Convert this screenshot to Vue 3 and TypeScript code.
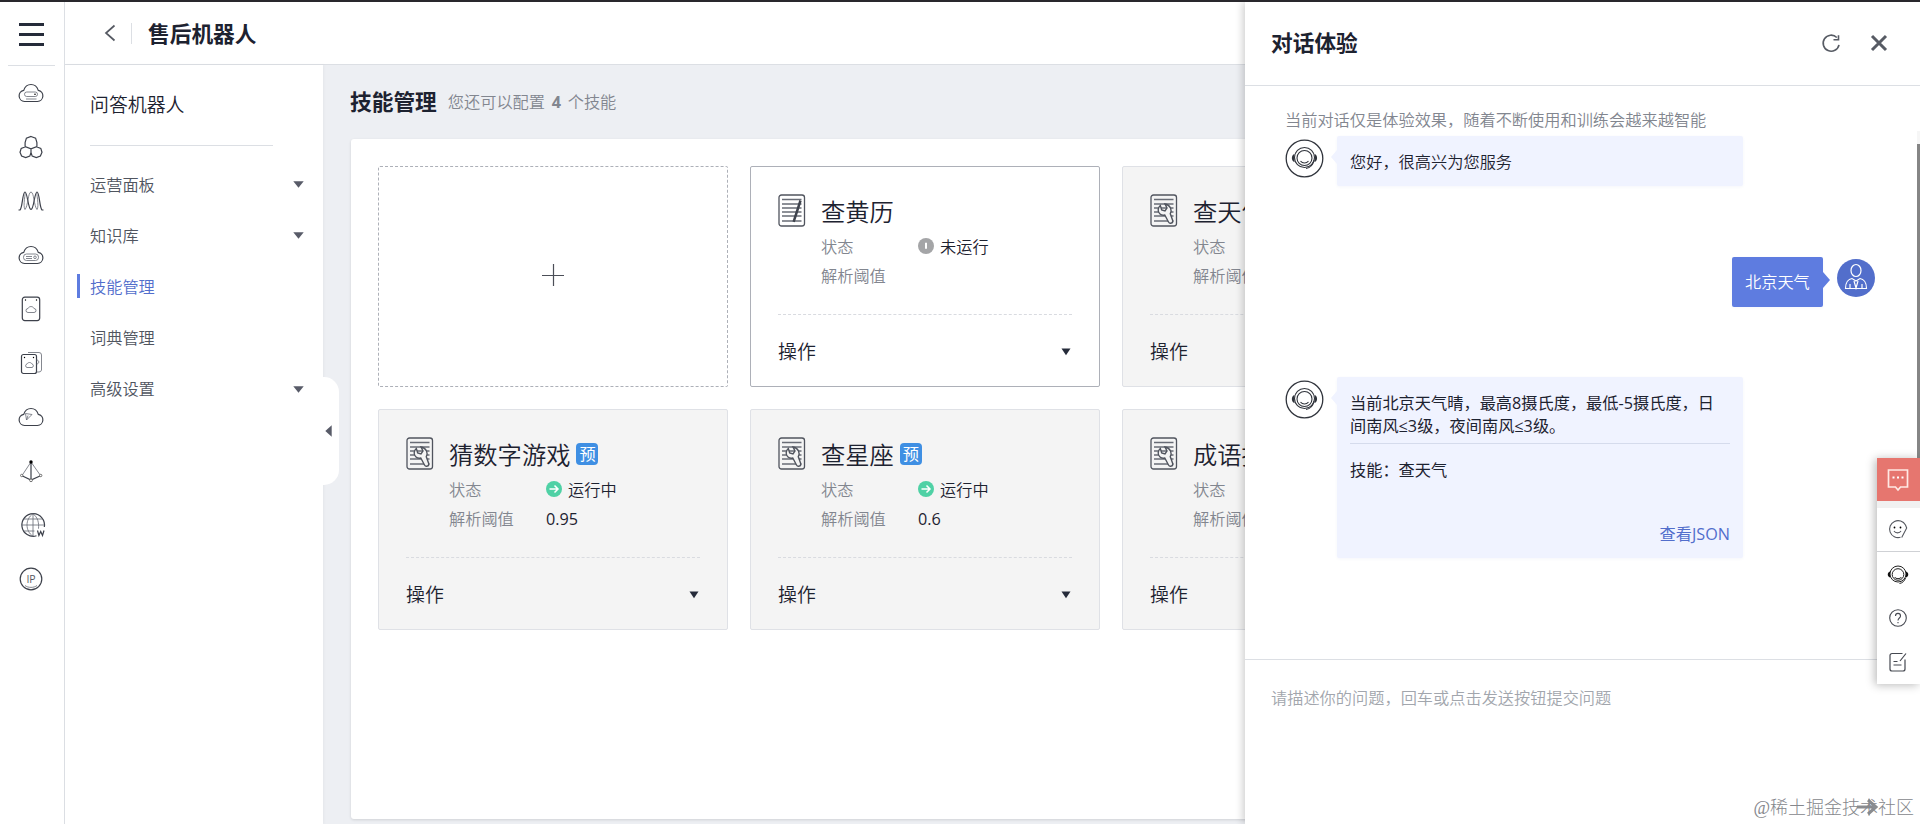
<script setup lang="ts">
interface NavItem { label: string; expandable: boolean; active?: boolean }
interface Skill { name: string; preset: boolean; running: boolean; threshold: string }

const nav: NavItem[] = [
  { label: '运营面板', expandable: true },
  { label: '知识库', expandable: true },
  { label: '技能管理', expandable: false, active: true },
  { label: '词典管理', expandable: false },
  { label: '高级设置', expandable: true },
]

const skills: Skill[] = [
  { name: '查黄历', preset: false, running: false, threshold: '' },
  { name: '查天气', preset: true, running: true, threshold: '0.9' },
  { name: '猜数字游戏', preset: true, running: true, threshold: '0.95' },
  { name: '查星座', preset: true, running: true, threshold: '0.6' },
  { name: '成语接龙', preset: true, running: true, threshold: '0.95' },
]
</script>

<template>
  <div class="app">
    <aside class="rail">
      <div class="burger"><i></i><i></i><i></i></div>
      <div class="rail-line"></div>
      <div class="rail-item">
        <svg width="26" height="26" viewBox="0 0 26 26"><path class="k" d="M6.500 21.500a5.600 5.600 0 0 1-.8-11.100C7 6.500 9.700 4.500 13 4.500s6 2 7.300 5.900a5.600 5.600 0 0 1-.8 11.100z" /><rect class="t" x="6.500" y="12" width="13" height="4.500" rx="2.200" /><path class="t" d="M8 19h10.500" /><circle cx="17" cy="14.200" r=".8" /></svg>
      </div>
      <div class="rail-item">
        <svg width="26" height="26" viewBox="0 0 26 26"><path class="k" d="M13 2.500l4.600 1.700 1.300 4.300V12.600L13 14.800 7.100 12.600V8.500l1.300-4.300zM7.500 12.700L3.200 14.400 2 18.200l1.600 3.900 4.100 1.500 4.100-1.500L13 18.500v-4M18.500 12.700l4.300 1.700 1.200 3.800-1.600 3.900-4.100 1.500-4.100-1.500L13 18.500" /></svg>
      </div>
      <div class="rail-item">
        <svg width="26" height="26" viewBox="0 0 26 26"><path class="k" d="M.5 22h1.500C4.500 20 4.500 4 7 4s3 17 6 17.500C16 21 16.500 4 19 4s2.500 16 5 18h1.500" /><path class="t" d="M7 21.500c3-3 3-17.500 6-17.500s3 14.500 6 17.500M7 21.500C4.500 18 8 4 7 4M19 21.500c2.500-3-1-17.500 0-17.500" /></svg>
      </div>
      <div class="rail-item">
        <svg width="26" height="26" viewBox="0 0 26 26"><path class="k" d="M6.500 21.500a5.600 5.600 0 0 1-.8-11.100C7 6.500 9.700 4.500 13 4.500s6 2 7.300 5.900a5.600 5.600 0 0 1-.8 11.100z" /><rect class="t" x="5.500" y="12" width="15" height="6.500" rx="3" /><path class="t" d="M8 14.500h6M8 16.500h6" /><circle class="t" cx="17" cy="15.300" r="1.300" /></svg>
      </div>
      <div class="rail-item">
        <svg width="26" height="26" viewBox="0 0 26 26"><rect class="k" x="4.300" y="1.200" width="17.400" height="23.400" rx="2.500" /><path class="t" d="M10 16.500a2 2 0 0 1 0-4c1-2.600 5-2.600 6 0a2 2 0 0 1 0 4z" /><circle cx="7.500" cy="4" r=".7" /><circle cx="18.500" cy="4" r=".7" /></svg>
      </div>
      <div class="rail-item">
        <svg width="26" height="26" viewBox="0 0 26 26"><rect class="k" x="3.500" y="4.500" width="15" height="19" rx="2" /><path class="t" d="M10 2.500h11a2.500 2.500 0 0 1 2.500 2.500v15a2.500 2.500 0 0 1-2.500 2H18.500M18.500 10c3 0 3 4 0 4M9 17.500a1.800 1.800 0 0 1 0-3.500c1-2 4-2 5 0a1.800 1.800 0 0 1 0 3.500z" /><circle cx="6.500" cy="7.500" r=".7" /><circle cx="15.500" cy="7.500" r=".7" /></svg>
      </div>
      <div class="rail-item">
        <svg width="26" height="26" viewBox="0 0 26 26"><path class="k" d="M6.500 21.500a5.600 5.600 0 0 1-.8-11.100C7 6.500 9.700 4.500 13 4.500s6 2 7.300 5.900a5.600 5.600 0 0 1-.8 11.100z" /><path class="t" d="M7.500 9.500l6.500 1-5.500 5.500zM8.500 16l1.500-4.500" /></svg>
      </div>
      <div class="rail-item">
        <svg width="26" height="26" viewBox="0 0 26 26"><path class="t" d="M13 4L4 17.500M13 4l9.500 13.500" /><path class="k" d="M4 17.800l9 4.200 9.500-4.200M13 4v17.500" /><circle cx="13" cy="4" r="1.700" /><circle class="w" cx="3.700" cy="17.500" r="1.200" /><circle class="w" cx="22.700" cy="17.500" r="1.200" /><circle class="w" cx="13" cy="22.300" r="1.400" /></svg>
      </div>
      <div class="rail-item">
        <svg class="globe" width="26" height="26" viewBox="0 0 26 26"><path class="k" d="M16.500 23.800A11.300 11.300 0 1 1 24.300 15" /><path class="t" d="M13 1.700v22.600M1.700 13h22.600M3.500 7h19M3.500 19h11M13 1.700C5 7 5 19 13 24.300M13 1.700c5 4 6 9 5.500 15" /><path class="k" d="M17.500 18.500l1.400 5 1.800-4 1.800 4 1.500-5" /></svg>
      </div>
      <div class="rail-item">
        <svg width="26" height="26" viewBox="0 0 26 26"><circle class="k" cx="13" cy="13" r="10.800" /><path class="t" d="M7 19.500c3 2.500 9 2.500 12 0" /><text x="13" y="16.600" text-anchor="middle" class="ip">IP</text></svg>
      </div>
    </aside>

    <div class="workspace">
      <header class="topbar">
        <svg width="12" height="18" viewBox="0 0 12 18"><path d="M10.500 1.500L2 9l8.500 7.500" fill="none" stroke="#555962" stroke-width="1.700" /></svg>
        <span class="sep"></span>
        <h1>售后机器人</h1>
      </header>
      <div class="body">
        <nav class="sidebar">
          <h2>问答机器人</h2>
          <ul>
            <li v-for="n in nav" :key="n.label" :class="{ active: n.active }">
              <span>{{ n.label }}</span>
              <svg v-if="n.expandable" width="11" height="7" viewBox="0 0 11 7"><path d="M.3.300h10.400L5.500 6.700z" fill="#585b68" /></svg>
            </li>
          </ul>
          <div class="handle"><svg width="7" height="12" viewBox="0 0 7 12"><path d="M6.700.3v11.400L.3 6z" fill="#585b68" /></svg></div>
        </nav>
        <main class="main">
          <div class="heading"><h2>技能管理</h2><p>您还可以配置 <b>4</b> 个技能</p></div>
          <section class="board">
            <div class="grid">
              <div class="card add">
                <svg width="24" height="24" viewBox="0 0 24 24"><path d="M12.500 1v22M1 12.500h22" stroke="#4b4e57" stroke-width="1.200" /></svg>
              </div>
              <article v-for="s in skills" :key="s.name" class="card" :class="s.running ? 'locked' : 'own'">
                <div class="info">
                  <svg class="doc" width="28" height="33" viewBox="0 0 28 33">
                    <rect x="1" y="1" width="25.500" height="31" rx="2.500" fill="none" stroke="#50545e" stroke-width="1.300" />
                    <path d="M4 5.500h19.500M4 10h19.500M4 14h19.500M4 18h19.500M4 22h19.500M4 27h19.500" stroke="#686c76" stroke-width="1.300" />
                    <path v-if="!s.running" d="M22.500 6.500L16.500 25l-.8 2.800" stroke="#3f434d" stroke-width="2.500" fill="none" />
                    <path v-else d="M10.300 11.500C7.500 14 7.500 17.800 10 20c1.500 1.300 3.300 1.500 4.800 1L18.500 28c1.200 2.200 4.700 1.400 4.200-1.500L20.300 19.700c2-3.500.3-8.600-5.300-9.700l2 4-2 3-3.300-1z" fill="#f4f4f4" stroke="#50545e" stroke-width="1.400" />
                  </svg>
                  <div class="detail">
                    <div class="name">{{ s.name }}<em v-if="s.preset">预</em></div>
                    <div class="row"><label>状态</label>
                      <svg v-if="s.running" width="16" height="16" viewBox="0 0 16 16"><circle cx="8" cy="8" r="8" fill="#4fd1a5" /><path d="M3.500 8h8.500M8.500 4.500L12 8l-3.500 3.500" fill="none" stroke="#fff" stroke-width="1.500" /></svg>
                      <svg v-else width="16" height="16" viewBox="0 0 16 16"><circle cx="8" cy="8" r="8" fill="#a4a5a7" /><path d="M8 4.800v6" stroke="#fff" stroke-width="2" /></svg>
                      <span class="state">{{ s.running ? '运行中' : '未运行' }}</span>
                    </div>
                    <div class="row"><label>解析阈值</label><span class="num">{{ s.threshold }}</span></div>
                  </div>
                </div>
                <div class="ops"><span>操作</span><svg width="10" height="8" viewBox="0 0 10 8"><path d="M.5.500h9L5 7.300z" fill="#252b3a" /></svg></div>
              </article>
            </div>
          </section>
        </main>
      </div>
    </div>

    <section class="drawer">
      <header>
        <h2>对话体验</h2>
        <svg width="20" height="20" viewBox="0 0 20 20"><path d="M15.800 4.500A8 8 0 1 0 18 11.800M17.500 2.200v4.600h-5" fill="none" stroke="#575b64" stroke-width="1.600" /></svg>
        <svg class="close" width="18" height="18" viewBox="0 0 18 18"><path d="M2 2l14 14M16 2L2 16" stroke="#575b64" stroke-width="3" /></svg>
      </header>
      <div class="chat">
        <p class="notice">当前对话仅是体验效果，随着不断使用和训练会越来越智能</p>
        <div class="msg first">
          <svg class="avatar" width="39" height="39" viewBox="0 0 39 39"><circle cx="19.500" cy="19.500" r="18.300" fill="#fff" stroke="#30343c" stroke-width="1.300" /><g fill="none" stroke="#30343c" stroke-width="1.100"><circle cx="19.500" cy="18.500" r="10" /><circle cx="19.500" cy="19" r="7.500" /><path d="M15.500 22c2 2.600 6 2.600 8 0M29 21c-1 5-4 8-8 8.500" /></g><path d="M9.500 15v8c-3.500-1-3.500-7 0-8zM29.500 15v8c3.500-1 3.500-7 0-8z" fill="#30343c" /></svg>
          <div class="bubble">您好，很高兴为您服务</div>
        </div>
        <div class="msg mine">
          <div class="bubble">北京天气</div>
          <svg class="avatar" width="38" height="38" viewBox="0 0 38 38"><circle cx="19" cy="19" r="19" fill="#526ecb" /><g fill="none" stroke="#fff" stroke-width="1.200"><ellipse cx="19" cy="11.500" rx="5" ry="6" /><path d="M15 19.500c-3.500.5-6.500 4-6.500 10h21c0-6-3-9.500-6.500-10L19 22zM13 29v-4M25 29v-4M17 22l2 7 2-7" /></g></svg>
        </div>
        <div class="msg reply">
          <svg class="avatar" width="39" height="39" viewBox="0 0 39 39"><circle cx="19.500" cy="19.500" r="18.300" fill="#fff" stroke="#30343c" stroke-width="1.300" /><g fill="none" stroke="#30343c" stroke-width="1.100"><circle cx="19.500" cy="18.500" r="10" /><circle cx="19.500" cy="19" r="7.500" /><path d="M15.500 22c2 2.600 6 2.600 8 0M29 21c-1 5-4 8-8 8.500" /></g><path d="M9.500 15v8c-3.500-1-3.500-7 0-8zM29.500 15v8c3.500-1 3.500-7 0-8z" fill="#30343c" /></svg>
          <div class="bubble">
            <p class="answer">当前北京天气晴，最高8摄氏度，最低-5摄氏度，日间南风≤3级，夜间南风≤3级。</p>
            <p class="skill">技能：查天气</p>
            <a>查看JSON</a>
          </div>
        </div>
        <div class="track"><i></i></div>
      </div>
      <footer>
        <p>请描述你的问题，回车或点击发送按钮提交问题</p>
        <svg class="send" width="24" height="20" viewBox="0 0 24 20"><path d="M1 10h18M12 3l8 7-8 7" fill="none" stroke="#8a8c90" stroke-width="3" /></svg>
        <span class="mark">@稀土掘金技术社区</span>
      </footer>
    </section>

    <div class="dock">
      <div class="hot"><svg width="22" height="24" viewBox="0 0 22 24"><path d="M1.500 2h19v17h-7L11 22l-2.500-3h-7z" fill="none" stroke="#ffe9e4" stroke-width="1.700" /><path d="M5.500 9.500h2M10 9.500h2M14.500 9.500h2" stroke="#fff" stroke-width="2" /></svg></div>
      <div class="smile"><svg width="20" height="22" viewBox="0 0 20 22"><g fill="none" stroke="#55585f" stroke-width="1.100"><path d="M12.500 19.300A8.500 8.500 0 1 1 17.500 7l1.200 3-5 9.500" /><path d="M6 13c1.500 2.500 5.500 2.500 7 0" /></g><circle cx="6.500" cy="9.500" r=".9" /><circle cx="12.500" cy="9.500" r=".9" /></svg></div>
      <div><svg width="22" height="20" viewBox="0 0 22 20"><g fill="none" stroke="#222" stroke-width="1"><circle cx="11" cy="9" r="8" /><circle cx="11" cy="9.500" r="5.800" /><path d="M7.500 12c1.500 2.200 5.500 2.200 7 0M18.500 13c-1 3-3 5-6 5.500" /></g><path d="M3 6.500v6C0 11.500 0 7.500 3 6.500zM19 6.500v6c3-1 3-5 0-6z" fill="#111" /></svg></div>
      <div><svg width="20" height="20" viewBox="0 0 20 20"><circle cx="10" cy="10" r="8.300" fill="none" stroke="#454850" stroke-width="1.100" /><path d="M7.500 8c0-3.500 5-3.500 5 0 0 2-2.500 2-2.500 4.500M10 14v1.300" fill="none" stroke="#454850" stroke-width="1.100" /></svg></div>
      <div><svg width="20" height="22" viewBox="0 0 20 22"><path d="M14.500 2.500H4a2 2 0 0 0-2 2v13.500a2 2 0 0 0 2 2h11a2 2 0 0 0 2-2V8.500M18 2.500l-6 7.500M5.500 10.500h4M5.500 14h8" fill="none" stroke="#454850" stroke-width="1.200" /></svg></div>
    </div>
  </div>
</template>

<style>
body { margin: 0; overflow: hidden; }
</style>

<style scoped>
* { box-sizing: border-box; }
h1, h2, p, ul { margin: 0; padding: 0; }
svg { display: block; flex: none; }
.app {
  position: relative; display: flex; width: 1920px; height: 824px; overflow: hidden;
  border-top: 2px solid #29282d; background: #fff; color: #1d2230;
  font: 350 16.22px/24px "Open Sans", "Noto Sans CJK SC", sans-serif;
}
.rail { width: 65px; flex: none; border-right: 1px solid #dcdfe4; }
.burger { height: 62px; padding: 21px 20px 0 19px; display: flex; flex-direction: column; gap: 7.500px; }
.burger i { height: 2.500px; background: #252b3a; }
.rail-line { margin: 1px 9px 0 8px; height: 1px; background: #dcdfe4; }
.rail-item { height: 54px; padding-right: 2px; display: flex; align-items: center; justify-content: center; }
.globe { margin-left: 4px; }
.k { fill: none; stroke: #3d414b; stroke-width: 1.200; }
.t { fill: none; stroke: #666a74; stroke-width: .8; }
.w { fill: #fff; stroke: #555; stroke-width: .8; }
.ip { font: 400 10.500px "Open Sans", sans-serif; fill: #555962; }

.workspace { flex: 1; min-width: 0; display: flex; flex-direction: column; }
.topbar { height: 63px; border-bottom: 1px solid #dcdfe4; display: flex; align-items: center; padding-left: 39px; flex: none; }
.sep { width: 1px; height: 21px; background: #dcdfe4; margin: 0 16px 0 15px; }
.topbar h1 { font-size: 21.700px; line-height: 30px; font-weight: 700; padding-top: 1px; }
.body { flex: 1; min-height: 0; display: flex; background: #edeff3; }
.sidebar { position: relative; width: 258px; background: #fff; padding-left: 25px; flex: none; box-shadow: 1px 0 3px rgba(0,0,0,.04); }
.sidebar h2 { font-size: 18.900px; font-weight: 350; line-height: 28px; padding: 26px 0 26px; width: 183px; border-bottom: 1px solid #dcdfe4; }
.sidebar ul { list-style: none; margin: 13px 0 0 -13px; }
.sidebar li { height: 51.200px; display: flex; align-items: center; justify-content: space-between; padding: 0 19px 0 13px; color: #50555f; position: relative; }
.sidebar li.active { color: #526ecc; }
.sidebar li.active::before { content: ''; position: absolute; left: 0; top: 13px; width: 3px; height: 24px; background: #5e7ce0; }
.handle { position: absolute; left: 257px; top: 312px; width: 17px; height: 108px; background: #fff; border-radius: 0 15px 15px 0; display: flex; align-items: center; padding-left: 3px; }
.main { flex: 1; min-width: 0; padding: 0 28px; }
.heading { height: 74px; display: flex; align-items: center; gap: 11px; }
.heading h2 { font-size: 21.700px; line-height: 30px; margin-left: -1px; }
.heading p { color: #82868f; }
.heading b { font-weight: 700; margin: 0 2.500px; }
.board { height: 680px; background: #fff; border-radius: 3px; padding: 27px; box-shadow: 0 1px 3px rgba(0,0,0,.12); }
.grid { display: grid; grid-template-columns: repeat(3, 350px); grid-auto-rows: 221px; gap: 22px; }
.card { border: 1px solid #dfe1e6; border-radius: 2px; padding: 0 27px; }
.add { border: 1px dashed #adb0b8; display: flex; align-items: center; justify-content: center; padding-bottom: 3px; }
.own { border-color: #adb0b8; }
.locked { background: #f4f4f4; }
.info { height: 148px; border-bottom: 1px dashed #d9dbe0; display: flex; gap: 15px; padding-top: 27px; }
.name { font-size: 24.300px; line-height: 36px; display: flex; align-items: center; height: 38px; padding-bottom: 3px; }
.name em { font: 400 16.200px/21px "Noto Sans CJK SC", sans-serif; background: #3f8fe3; color: #fff; width: 22px; height: 22px; border-radius: 4px; text-align: center; margin: -2px 0 0 6px; flex: none; }
.row { display: flex; align-items: center; height: 29px; }
.row label { width: 97px; color: #82868f; flex: none; }
.row svg { margin-top: -2px; }
.row .state { margin-left: 6px; }
.num { font-weight: 400; }
.ops { display: flex; align-items: center; justify-content: space-between; height: 71px; font-size: 18.900px; padding: 2px 1px 0 0; }

.drawer { position: absolute; left: 1245px; top: 0; width: 675px; height: 822px; background: #fff; box-shadow: -2px 0 8px rgba(0,0,0,.2); display: flex; flex-direction: column; }
.drawer header { height: 84px; border-bottom: 1px solid #dcdfe4; display: flex; align-items: center; padding: 0 32px 2px 26px; flex: none; }
.drawer h2 { font-size: 21.700px; line-height: 30px; margin-right: auto; }
.close { margin-left: 29px; }
.chat { position: relative; height: 574px; border-bottom: 1px solid #dcdfe4; padding: 22px 0 0 40px; }
.notice { color: #82868f; height: 28px; }
.msg { display: flex; gap: 13px; }
.msg .bubble { position: relative; width: 406px; background: #f0f3ff; border-radius: 2px; padding: 14px 13px 12px; box-shadow: 0 1px 3px rgba(80,100,180,.06); }
.first .bubble { height: 50px; }
.first .avatar, .reply .avatar { margin-top: 3px; }
.bubble::before { content: ''; position: absolute; left: -6px; top: 14px; border: 7px solid transparent; border-left: 0; border-right: 6px solid #f0f3ff; }
.mine { justify-content: flex-end; gap: 14px; margin: 71px 45px 70px 0; }
.mine .avatar { margin-top: 2px; }
.mine .bubble { width: 91px; height: 50px; padding-top: 13px; background: #5e7ce0; color: #fff; white-space: nowrap; }
.mine .bubble::before { left: auto; right: -7px; top: 15px; border: 8px solid transparent; border-right: 0; border-left: 7px solid #5e7ce0; }
.reply .bubble { height: 181px; padding-top: 15px; display: flex; flex-direction: column; font-weight: 380; }
.answer { line-height: 23px; height: 54px; padding-right: 8px; border-bottom: 1px solid #d5dbec; }
.skill { margin-top: 14px; }
.bubble a { margin: 40px 0 0 auto; color: #526ecc; font-weight: 400; }
.track { position: absolute; right: 0; top: 45px; bottom: 0; width: 3px; background: #f6f6f6; padding-top: 13px; }
.track i { display: block; height: 314px; background: #858585; }
footer { position: relative; flex: 1; padding: 26px 26px; color: #a2a6ad; }
.send { position: absolute; left: 611px; top: 137px; }
.mark { position: absolute; right: 6px; top: 134px; font: 300 18px/28px "Liberation Serif", "Noto Sans CJK SC", serif; color: #85878c; white-space: nowrap; }

.dock { position: absolute; left: 1877px; top: 456px; width: 43px; height: 226px; background: #fff; box-shadow: -2px 1px 9px rgba(0,0,0,.28); }
.dock > div { height: 43.500px; padding-top: 3px; padding-right: 2px; display: flex; align-items: center; justify-content: center; }
.dock .hot { height: 43px; background: #e6766f; padding-top: 0; }
.dock .smile { margin-top: 7px; padding-top: 0; border-bottom: 1px solid #cfd1d5; box-shadow: 0 -7px 0 #f1f1f1; }
</style>
